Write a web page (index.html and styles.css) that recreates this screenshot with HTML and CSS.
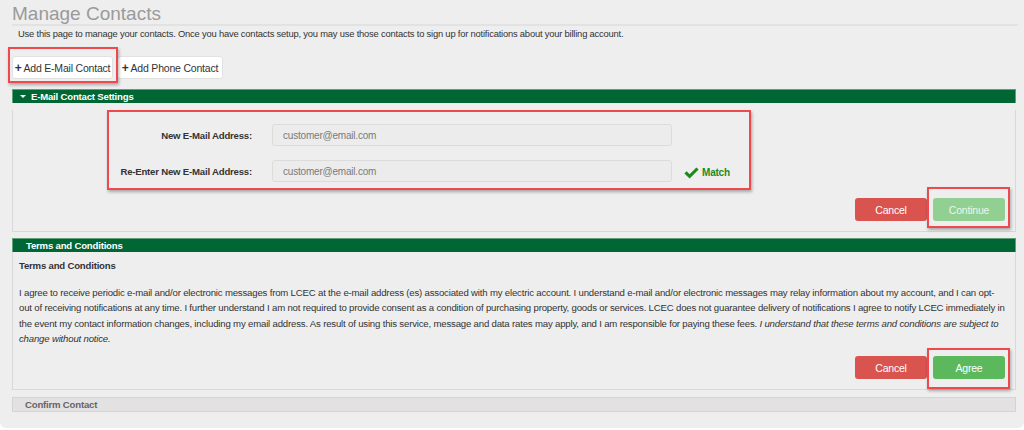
FILE: index.html
```html
<!DOCTYPE html>
<html lang="en">

<head>
    <meta charset="UTF-8">
    <title>Manage Contacts</title>
    <link rel="stylesheet" href="styles.css">
</head>

<body>
    <div class="page">
        <h1 class="title">Manage Contacts</h1>
        <p class="intro">Use this page to manage your contacts. Once you have contacts setup, you may use those contacts to sign up for notifications about your billing account.</p>

        <div class="add-buttons">
            <span class="callout callout-add"><button class="btn btn-default"><b class="plus">+</b>Add E-Mail Contact</button></span>
            <button class="btn btn-default btn-phone"><b class="plus">+</b>Add Phone Contact</button>
        </div>

        <!-- email settings -->
        <div class="panel">
            <div class="panel-heading"><span class="caret"></span>E-Mail Contact Settings</div>
            <div class="panel-body">
                <div class="email-form">
                    <div class="form-row">
                        <label>New E-Mail Address:</label>
                        <input class="form-control" type="text" value="customer@email.com">
                    </div>
                    <div class="form-row">
                        <label>Re-Enter New E-Mail Address:</label>
                        <input class="form-control" type="text" value="customer@email.com">
                        <span class="match">
                            <svg width="15" height="12" viewBox="0 0 15 12"><path d="M0.4 6.4 L2.6 4.2 L5.6 7.2 L12.4 0.4 L14.6 2.6 L5.6 11.6 Z" fill="#1a8a1a"/></svg>
                            Match
                        </span>
                    </div>
                </div>
                <div class="btn-row">
                    <button class="btn btn-danger">Cancel</button>
                    <span class="callout callout-btn"><button class="btn btn-success" disabled>Continue</button></span>
                </div>
            </div>
        </div>

        <!-- terms -->
        <div class="panel">
            <div class="panel-heading heading-plain">Terms and Conditions</div>
            <div class="panel-body">
                <h4 class="terms-title">Terms and Conditions</h4>
                <p class="terms">I agree to receive periodic e-mail and/or electronic messages from LCEC at the e-mail address (es) associated with my electric account. I understand e-mail and/or electronic messages may relay information about my account, and I can opt-out of receiving notifications at any time. I further understand I am not required to provide consent as a condition of purchasing property, goods or services. LCEC does not guarantee delivery of notifications I agree to notify LCEC immediately in the event my contact information changes, including my email address. As result of using this service, message and data rates may apply, and I am responsible for paying these fees. <i>I understand that these terms and conditions are subject to change without notice.</i></p>
                <div class="btn-row btn-row-terms">
                    <button class="btn btn-danger">Cancel</button>
                    <span class="callout callout-agree"><button class="btn btn-success">Agree</button></span>
                </div>
            </div>
        </div>

        <div class="confirm-bar">Confirm Contact</div>
    </div>
</body>

</html>
```

FILE: styles.css
```css
body {
    margin: 0;
    background-color: #fff;
    font-family: "Liberation Sans", Arial, sans-serif;
    color: #333;
}

.page {
    height: 428px;
    box-sizing: border-box;
    padding: 0 8px 0 12px;
    background-color: #eeeeee;
    border-radius: 0 0 6px 6px;
    overflow: hidden;
    letter-spacing: -0.2px;
}

.title {
    margin: 0;
    padding-top: 4px;
    height: 20px;
    font-size: 19px;
    font-weight: normal;
    line-height: 20px;
    letter-spacing: 0;
    color: #9a9a9a;
    border-bottom: 2px solid #e2e2e2;
    margin-right: -2px;
}

.intro {
    margin: 2px 0 0 6px;
    font-size: 9.4px;
    line-height: 12px;
    color: #333;
}

.add-buttons {
    display: flex;
    gap: 4px;
    margin-top: 16px;
}

.btn {
    font-family: "Liberation Sans", Arial, sans-serif;
    letter-spacing: -0.2px;
    height: 23px;
    padding: 0 8px;
    font-size: 10.5px;
    border-radius: 3px;
    border: 1px solid transparent;
    cursor: pointer;
}

.btn-default {
    background-color: #fff;
    border-color: #e2e2e2;
    color: #333;
    width: 101px;
    padding: 0;
}

.btn-phone {
    width: 106px;
}

.plus {
    font-size: 12px;
    margin-right: 2px;
}

.btn-danger {
    background-color: #d9534f;
    color: #fff;
    width: 72px;
}

.btn-success {
    background-color: #5cb85c;
    color: #fff;
    width: 72px;
}

.btn-success:disabled {
    background-color: #92cf92;
    color: #eaf6ea;
}

/* red annotation frames */
.callout {
    position: relative;
    display: inline-block;
}

.callout::after {
    content: "";
    position: absolute;
    border: 2px solid #ee4a4d;
    box-shadow: 1px 2px 3px rgba(0, 0, 0, 0.3);
    pointer-events: none;
}

.callout-add::after {
    top: -9px;
    left: -4px;
    right: -5px;
    bottom: -4px;
}

.callout-btn::after {
    top: -11px;
    left: -6px;
    right: -5px;
    bottom: -7px;
}

.callout-agree::after {
    top: -8px;
    left: -6px;
    right: -5px;
    bottom: -10px;
}

.panel {
    margin-top: 10px;
    width: 1004px;
}

.panel + .panel {
    margin-top: 6px;
}

.panel-heading {
    height: 13px;
    line-height: 13px;
    background-color: #006633;
    border: 1px solid #5f9f76;
    border-bottom: none;
    color: #fff;
    font-size: 9.6px;
    font-weight: bold;
    padding-left: 7px;
}

.heading-plain {
    padding-left: 13px;
}

.caret {
    display: inline-block;
    width: 0;
    height: 0;
    border-left: 3px solid transparent;
    border-right: 3px solid transparent;
    border-top: 3px solid #fff;
    vertical-align: middle;
    margin-right: 5px;
    margin-bottom: 1px;
}

.panel-body {
    border: 1px solid #d8d8d8;
    border-top: none;
    padding: 0 10px 10px 6px;
}

.email-form {
    margin: 7px 0 0 88px;
    width: 640px;
    height: 64px;
    border: 2px solid #ee4a4d;
    box-shadow: 1px 2px 3px rgba(0, 0, 0, 0.3);
    padding-top: 12px;
}

.form-row {
    display: flex;
    align-items: center;
    height: 22px;
}

.form-row + .form-row {
    margin-top: 14px;
}

.form-row label {
    width: 143px;
    margin-right: 20px;
    text-align: right;
    font-size: 9.6px;
    font-weight: bold;
    color: #333;
}

.form-control {
    width: 400px;
    height: 22px;
    box-sizing: border-box;
    padding: 0 10px;
    border: 1px solid #dcdcdc;
    border-radius: 3px;
    background-color: #ececec;
    font-family: "Liberation Sans", Arial, sans-serif;
    letter-spacing: -0.2px;
    font-size: 10px;
    color: #7a7a7a;
}

.match {
    display: flex;
    align-items: center;
    gap: 3px;
    margin-left: 12px;
    margin-top: 3px;
    color: #1d8a1d;
    font-size: 10px;
    font-weight: bold;
}

.btn-row {
    display: flex;
    justify-content: flex-end;
    gap: 6px;
    margin-top: 8px;
}

.terms-title {
    margin: 0;
    padding-top: 8px;
    font-size: 9.6px;
    line-height: 12px;
    font-weight: bold;
}

.terms {
    margin: 13px 0 0;
    font-size: 9.6px;
    line-height: 15.3px;
    letter-spacing: -0.18px;
    color: #333;
}

.btn-row-terms {
    margin-top: 10px;
}

.confirm-bar {
    margin-top: 7px;
    width: 1004px;
    box-sizing: border-box;
    height: 15px;
    line-height: 13px;
    background-color: #e3e1e1;
    border: 1px solid #d4d4d4;
    padding-left: 12px;
    font-size: 9.6px;
    font-weight: bold;
    color: #666;
}
```
